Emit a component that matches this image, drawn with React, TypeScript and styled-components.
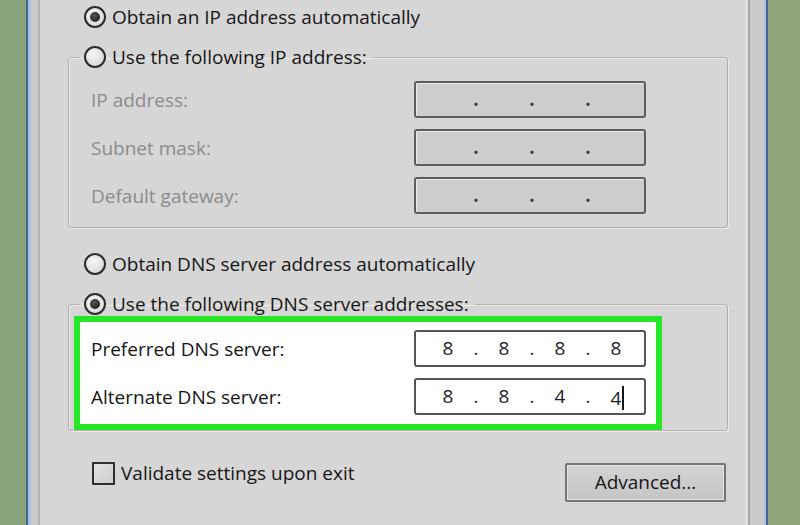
import React from 'react';
import styled, { createGlobalStyle } from 'styled-components';

const GlobalStyle = createGlobalStyle`
  *, *::before, *::after {
    box-sizing: border-box;
  }

  html, body {
    margin: 0;
    padding: 0;
    overflow: hidden;
  }

  body {
    background: #8ea67e;
    font-family: "Open Sans", "Noto Sans", sans-serif;
  }
`;

const Desktop = styled.div`
  width: 800px;
  height: 525px;
  padding-left: 26px;
  background: linear-gradient(90deg, #8aa37a, #8fa67d 60%, #90a57c);
`;

const Window = styled.div`
  width: 742px;
  height: 525px;
  padding: 0 16px 0 10px;
  background: #cbcaca;
  border-left: 2px solid #46638e;
  border-right: 2px solid #46638e;
  box-shadow: inset 3px 0 0 #a9c1e7, inset -2px 0 0 #a9c1e7;
`;

const TabPage = styled.div`
  height: 100%;
  padding: 5px 20px 0 28px;
  background: #d6d6d6;
  border-left: 2px solid #b2b2b2;
  border-right: 2px solid #a9a9a9;
  box-shadow: inset -3px 0 0 #dfdfdf;
  color: #161616;
  font-size: 19px;
`;

const RadioLabel = styled.label<{ $indent?: number; $top?: number }>`
  display: flex;
  align-items: center;
  gap: 6px;
  width: fit-content;
  height: 24px;
  margin-left: ${(p) => p.$indent ?? 0}px;
  margin-top: ${(p) => p.$top ?? 0}px;
  line-height: 24px;
  white-space: nowrap;
`;

const RadioCircle = styled.span<{ $checked?: boolean }>`
  flex: none;
  display: grid;
  place-items: center;
  width: 22px;
  height: 22px;
  border-radius: 50%;
  border: 2px solid #2b2b2b;
  background: radial-gradient(circle at 40% 35%, #f6f6f6, #d2d2d2);

  &::after {
    content: '';
    display: ${(p) => (p.$checked ? 'block' : 'none')};
    width: 10px;
    height: 10px;
    border-radius: 50%;
    background: radial-gradient(circle at 40% 35%, #555, #111);
  }
`;

const Group = styled.fieldset<{ $bottom: number }>`
  min-width: 0;
  margin: 16px 0 0;
  padding: 0 0 ${(p) => p.$bottom}px;
  border: 1px solid #b0b0b0;
  border-radius: 3px;
  box-shadow: inset 1px 1px 0 #ececec, 1px 1px 0 #ececec;
`;

const Legend = styled.legend`
  margin-left: 11px;
  padding: 0 6px 0 4px;
  height: 24px;
  line-height: 24px;
`;

const Fields = styled.div`
  display: grid;
  gap: 11px;
  padding: 12px 0 0 22px;
`;

const Highlight = styled.div`
  display: grid;
  gap: 11px;
  width: 588px;
  margin-left: 5px;
  padding: 8px 0 9px 11px;
  background: #ffffff;
  border: 6px solid #27e527;
`;

const FieldRow = styled.div`
  display: grid;
  grid-template-columns: 323px 232px;
  align-items: center;
`;

const FieldLabel = styled.span<{ $disabled?: boolean }>`
  color: ${(p) => (p.$disabled ? '#8b8b8b' : '#161616')};
  white-space: nowrap;
`;

const IpBox = styled.div<{ $disabled?: boolean }>`
  display: flex;
  align-items: center;
  width: 232px;
  height: 37px;
  padding-left: 8px;
  border: 2px solid ${(p) => (p.$disabled ? '#5d5d5d' : '#555555')};
  border-radius: 3px;
  background: ${(p) => (p.$disabled ? '#cdcdcd' : '#ffffff')};
  box-shadow: inset 1px 1px 0 ${(p) => (p.$disabled ? '#ededed' : '#ffffff')};
  color: #1c1c2a;
  font-size: 19px;
  line-height: 1;
`;

const Octet = styled.span`
  width: 48px;
  text-align: center;
  white-space: nowrap;
`;

const Dot = styled.span<{ $disabled?: boolean }>`
  width: 8px;
  text-align: center;
  color: ${(p) => (p.$disabled ? '#3c3c3c' : '#1c1c1c')};
  font-weight: ${(p) => (p.$disabled ? 700 : 400)};
`;

const Caret = styled.span`
  display: inline-block;
  width: 2px;
  height: 24px;
  margin: 0 -3px -5px 1px;
  background: #151515;
`;

const Footer = styled.div`
  display: flex;
  justify-content: space-between;
  align-items: flex-start;
  margin-top: 30px;
  padding: 0 2px 0 24px;
`;

const CheckLabel = styled.label`
  display: flex;
  align-items: center;
  gap: 6px;
  height: 24px;
  white-space: nowrap;
`;

const CheckBox = styled.span`
  width: 23px;
  height: 23px;
  border: 2px solid #2e2e2e;
  border-radius: 1px;
  background: linear-gradient(135deg, #e2e2e2, #cdcdcd);
`;

const Button = styled.button`
  width: 161px;
  height: 39px;
  margin-top: 2px;
  padding: 0 0 2px;
  border: 2px solid #747474;
  border-radius: 2px;
  background: linear-gradient(#d3d3d3, #c5c5c5);
  box-shadow: inset 0 0 0 1px #e4e4e4;
  color: #161616;
  font-family: inherit;
  font-size: 19px;
`;

type IpProps = { octets?: string[]; disabled?: boolean; caret?: boolean };

function IpField({ octets = ['', '', '', ''], disabled, caret }: IpProps) {
  return (
    <IpBox $disabled={disabled}>
      {octets.map((o, i) => (
        <React.Fragment key={i}>
          {i > 0 && <Dot $disabled={disabled}>.</Dot>}
          <Octet>
            {o}
            {caret && i === octets.length - 1 && <Caret />}
          </Octet>
        </React.Fragment>
      ))}
    </IpBox>
  );
}

function Radio({ checked, children }: { checked?: boolean; children: React.ReactNode }) {
  return (
    <>
      <RadioCircle $checked={checked} />
      <span>{children}</span>
    </>
  );
}

const ipRows = ['IP address:', 'Subnet mask:', 'Default gateway:'];

export default function App() {
  return (
    <>
      <GlobalStyle />
      <Desktop>
        <Window>
          <TabPage>
            <RadioLabel $indent={16}>
              <Radio checked>Obtain an IP address automatically</Radio>
            </RadioLabel>

            <Group $bottom={13}>
              <Legend>
                <RadioLabel>
                  <Radio>Use the following IP address:</Radio>
                </RadioLabel>
              </Legend>
              <Fields>
                {ipRows.map((label) => (
                  <FieldRow key={label}>
                    <FieldLabel $disabled>{label}</FieldLabel>
                    <IpField disabled />
                  </FieldRow>
                ))}
              </Fields>
            </Group>

            <RadioLabel $indent={16} $top={24}>
              <Radio>Obtain DNS server address automatically</Radio>
            </RadioLabel>

            <Group $bottom={0}>
              <Legend>
                <RadioLabel>
                  <Radio checked>Use the following DNS server addresses:</Radio>
                </RadioLabel>
              </Legend>
              <Highlight>
                <FieldRow>
                  <FieldLabel>Preferred DNS server:</FieldLabel>
                  <IpField octets={['8', '8', '8', '8']} />
                </FieldRow>
                <FieldRow>
                  <FieldLabel>Alternate DNS server:</FieldLabel>
                  <IpField octets={['8', '8', '4', '4']} caret />
                </FieldRow>
              </Highlight>
            </Group>

            <Footer>
              <CheckLabel>
                <CheckBox />
                <span>Validate settings upon exit</span>
              </CheckLabel>
              <Button type="button">Advanced...</Button>
            </Footer>
          </TabPage>
        </Window>
      </Desktop>
    </>
  );
}
